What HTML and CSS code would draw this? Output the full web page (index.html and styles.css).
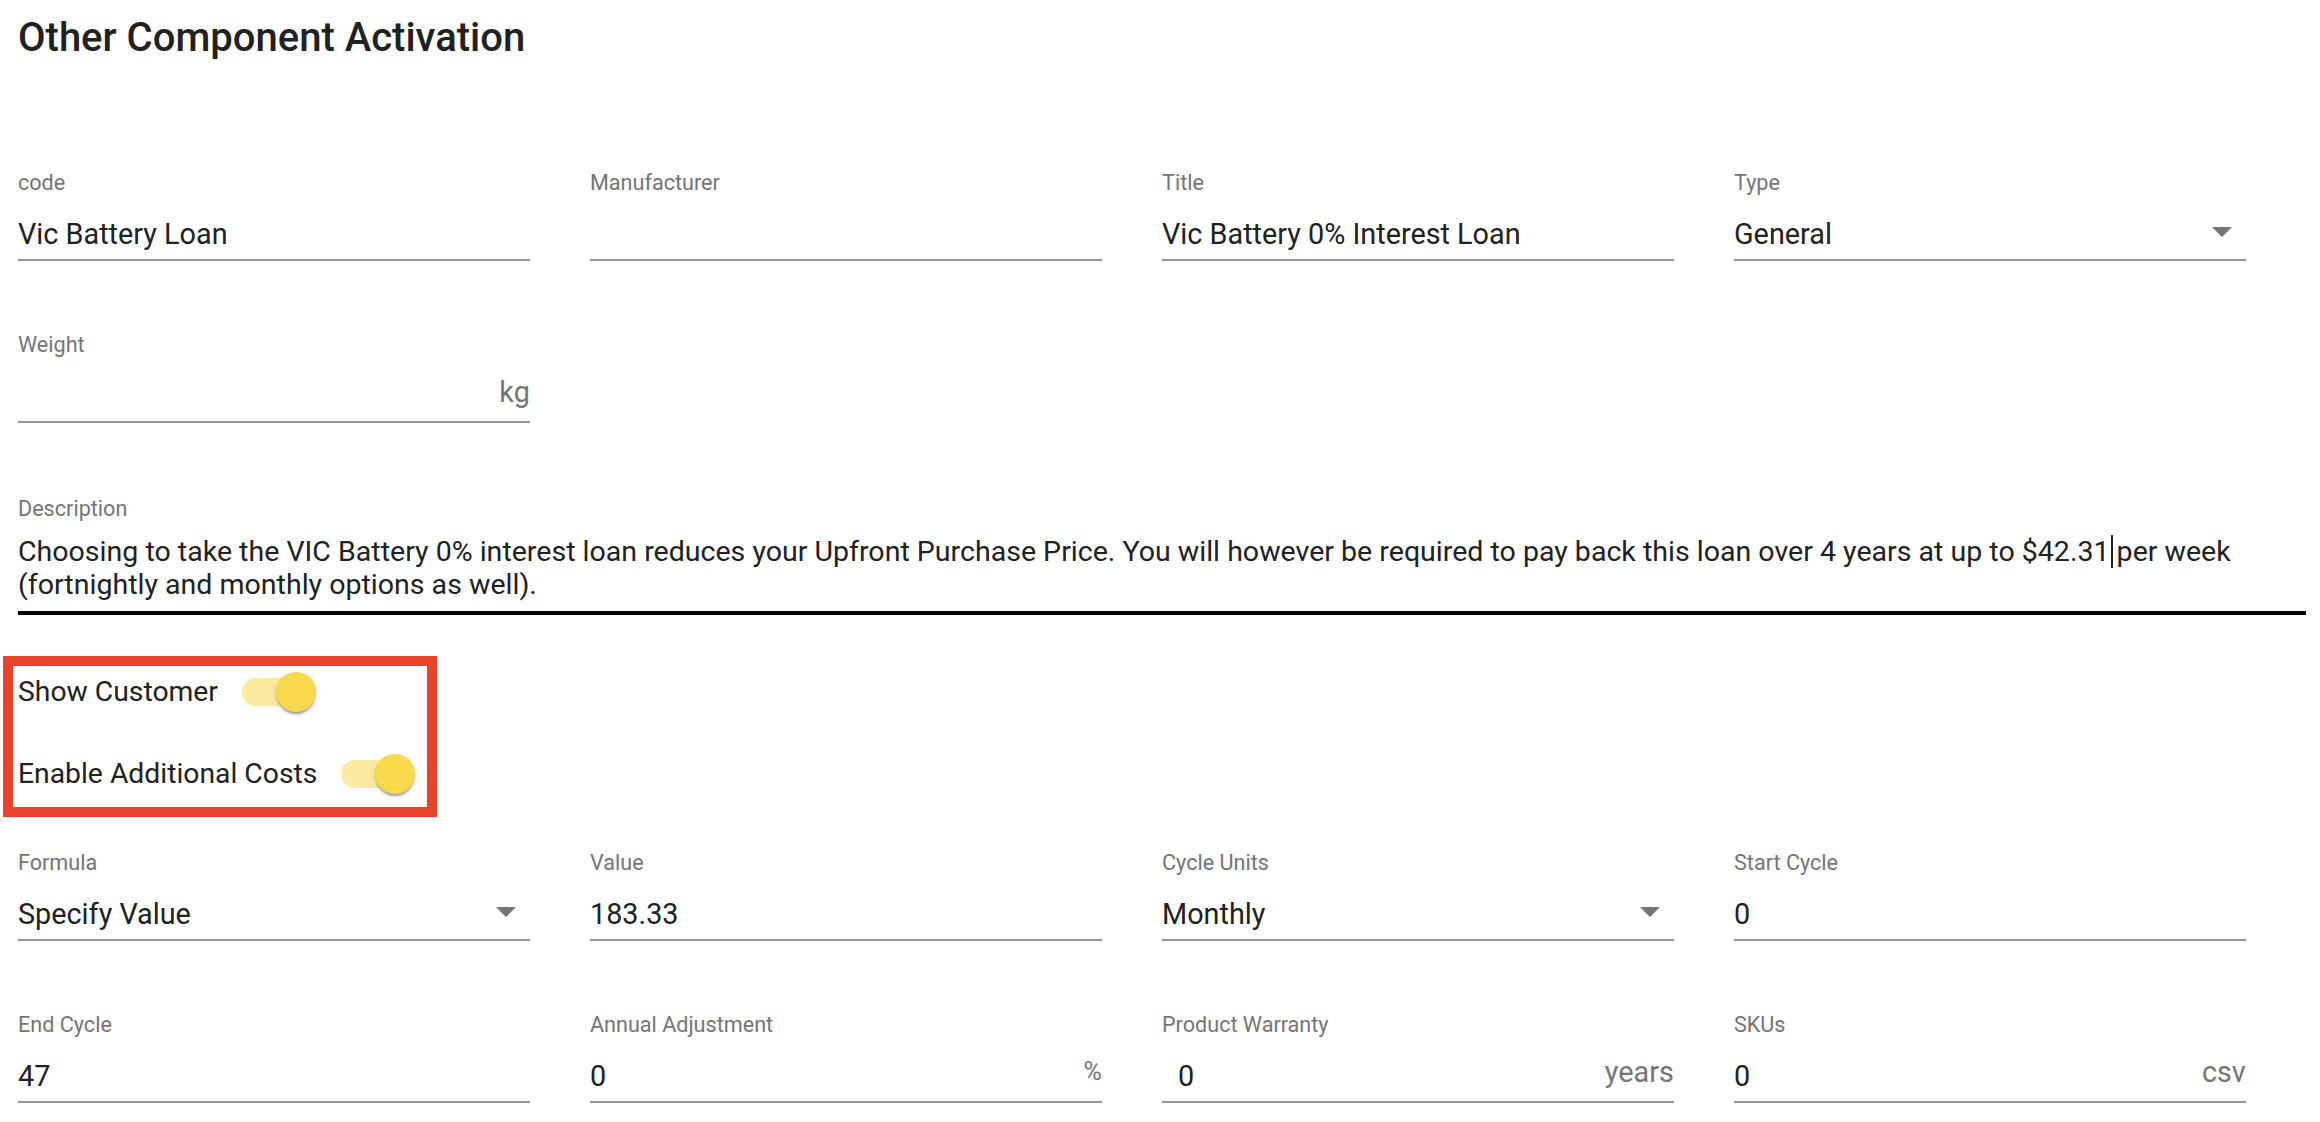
FILE: index.html
```html
<!DOCTYPE html>
<html lang="en">
<head>
<meta charset="utf-8">
<title>Other Component Activation</title>
<link rel="stylesheet" href="styles.css">
</head>
<body>
<main class="page">
  <h1 class="title">Other Component Activation</h1>

  <div class="grid grid-top">
    <div class="field">
      <span class="label">code</span>
      <div class="control"><span class="value">Vic Battery Loan</span></div>
    </div>
    <div class="field">
      <span class="label">Manufacturer</span>
      <div class="control"><span class="value"></span></div>
    </div>
    <div class="field">
      <span class="label">Title</span>
      <div class="control"><span class="value">Vic Battery 0% Interest Loan</span></div>
    </div>
    <div class="field">
      <span class="label">Type</span>
      <div class="control"><span class="value">General</span><svg class="arrow" viewBox="0 0 10 5"><path d="M0 0L5 5L10 0Z"/></svg></div>
    </div>
    <div class="field">
      <span class="label">Weight</span>
      <div class="control"><span class="value"></span><span class="suffix">kg</span></div>
    </div>
  </div>

  <div class="desc">
    <span class="label">Description</span>
    <div class="desc-control">
      <div class="desc-text">Choosing to take the VIC Battery 0% interest loan reduces your Upfront Purchase Price. You will however be required to pay back this loan over 4 years at up to $42.31<span class="caret"></span> per week (fortnightly and monthly options as well).</div>
    </div>
  </div>

  <div class="toggles">
    <div class="toggle">
      <span class="toggle-label">Show Customer</span>
      <span class="switch"><span class="track"></span><span class="thumb"></span></span>
    </div>
    <div class="toggle">
      <span class="toggle-label">Enable Additional Costs</span>
      <span class="switch"><span class="track"></span><span class="thumb"></span></span>
    </div>
  </div>

  <div class="grid grid-bottom">
    <div class="field">
      <span class="label">Formula</span>
      <div class="control"><span class="value">Specify Value</span><svg class="arrow" viewBox="0 0 10 5"><path d="M0 0L5 5L10 0Z"/></svg></div>
    </div>
    <div class="field">
      <span class="label">Value</span>
      <div class="control"><span class="value">183.33</span></div>
    </div>
    <div class="field">
      <span class="label">Cycle Units</span>
      <div class="control"><span class="value">Monthly</span><svg class="arrow" viewBox="0 0 10 5"><path d="M0 0L5 5L10 0Z"/></svg></div>
    </div>
    <div class="field">
      <span class="label">Start Cycle</span>
      <div class="control"><span class="value">0</span></div>
    </div>
    <div class="field">
      <span class="label">End Cycle</span>
      <div class="control"><span class="value">47</span></div>
    </div>
    <div class="field">
      <span class="label">Annual Adjustment</span>
      <div class="control"><span class="value">0</span><span class="suffix suffix-small">%</span></div>
    </div>
    <div class="field">
      <span class="label">Product Warranty</span>
      <div class="control"><span class="value value-indent">0</span><span class="suffix">years</span></div>
    </div>
    <div class="field">
      <span class="label">SKUs</span>
      <div class="control"><span class="value">0</span><span class="suffix">csv</span></div>
    </div>
  </div>
</main>
</body>
</html>
```

FILE: styles.css
```css
* {
  box-sizing: border-box;
}

html,
body {
  margin: 0;
  background: #ffffff;
}

body {
  font-family: Roboto, "Liberation Sans", Arial, sans-serif;
  color: #212121;
}

.page {
  padding: 0 14px 0 18px;
}

.title {
  margin: 14px 0 0;
  font-size: 40px;
  line-height: 48px;
  font-weight: 500;
  color: #212121;
}

.grid {
  display: grid;
  grid-template-columns: repeat(4, 1fr);
  row-gap: 73px;
}

.grid-top {
  margin-top: 110px;
}

.grid-bottom {
  margin-top: 35px;
}

.field {
  width: calc(90% - 3px);
}

.label {
  display: block;
  height: 22px;
  font-size: 21.6px;
  line-height: 22px;
  color: #757575;
  white-space: nowrap;
}

.control {
  display: flex;
  align-items: center;
  padding: 23px 0 8px;
  border-bottom: 2px solid #949494;
}

.value {
  flex: 1;
  height: 34px;
  font-size: 28.8px;
  line-height: 34px;
  color: #212121;
  white-space: nowrap;
}

.value-indent {
  padding-left: 16px;
}

.suffix {
  flex: none;
  font-size: 28.8px;
  line-height: 26px;
  padding-bottom: 8px;
  color: #757575;
}

.suffix-small {
  font-size: 25px;
}

.arrow {
  flex: none;
  width: 20px;
  height: 10px;
  margin: 0 14px 4px 0;
  fill: #757575;
}

.desc {
  margin-top: 75px;
}

.desc-control {
  padding: 15px 0 10px;
  border-bottom: 4px solid #000000;
}

.desc-text {
  font-size: 28.55px;
  line-height: 33px;
  color: #212121;
}

.caret {
  display: inline-block;
  width: 2px;
  height: 33px;
  margin-left: 1px;
  margin-right: -3px;
  vertical-align: top;
  background: #212121;
}

.toggles {
  display: flex;
  flex-direction: column;
  gap: 30px;
  width: 434px;
  margin: 41px 0 0 -15px;
  padding: 0 0 7px 5px;
  border: 10px solid #e8422a;
}

.toggle {
  display: flex;
  align-items: center;
  height: 52px;
}

.toggle-label {
  font-size: 28.3px;
  line-height: 34px;
  color: #212121;
  white-space: nowrap;
}

.switch {
  position: relative;
  flex: none;
  width: 74px;
  height: 40px;
  margin-left: 24px;
}

.track {
  position: absolute;
  left: 0;
  top: 6px;
  width: 68px;
  height: 28px;
  border-radius: 14px;
  background: #fbeba1;
}

.thumb {
  position: absolute;
  left: 34px;
  top: 0;
  width: 40px;
  height: 40px;
  border-radius: 50%;
  background: #f8d94b;
  box-shadow: 0 4px 2px -2px rgba(0, 0, 0, 0.2), 0 2px 2px 0 rgba(0, 0, 0, 0.14), 0 2px 6px 0 rgba(0, 0, 0, 0.12);
}
```
